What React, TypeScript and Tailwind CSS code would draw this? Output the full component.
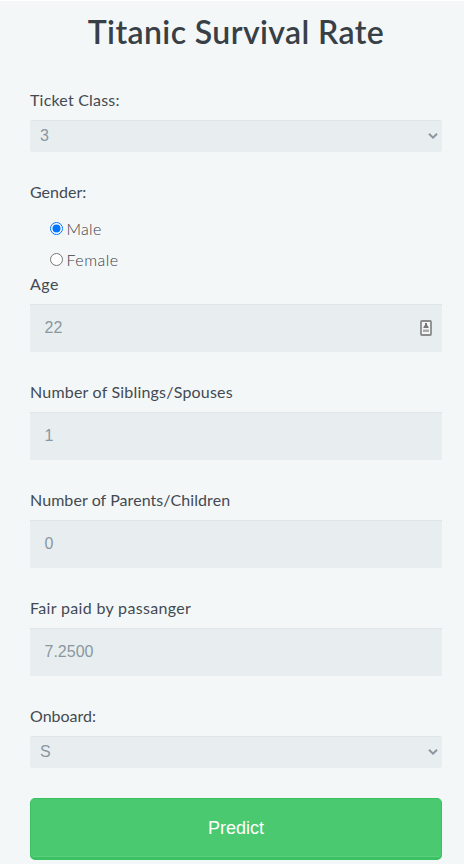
import React from "react";

const labelFont = "font-['Lato','Noto_Sans',sans-serif]";
const fieldFont = "font-['Liberation_Sans',Arial,sans-serif]";

function Label({ children, spacing }: { children: string; spacing: string }) {
  return (
    <div className={`${labelFont} h-6 text-[16px] leading-[22px] text-[#434a52]`}>
      <span className={`${spacing} whitespace-nowrap`}>{children}</span>
    </div>
  );
}

function SelectBox({ value }: { value: string }) {
  return (
    <div className={`${fieldFont} mt-[7px] mb-[29px] flex h-8 items-center justify-between rounded-[2px] bg-[#e8eeef] pr-1 pl-[10px] text-[16px] text-[#8a97a0] shadow-[inset_0_1px_0_rgba(0,0,0,0.03)]`}>
      <span>{value}</span>
      <svg width="10" height="6" viewBox="0 0 10 6" fill="none" stroke="#8a97a0" strokeWidth="2">
        <path d="M1 0.8 5 4.6 9 0.8" />
      </svg>
    </div>
  );
}

function TextBox({ value, children }: { value: string; children?: React.ReactNode }) {
  return (
    <div className={`${fieldFont} mt-[7px] mb-[29px] flex h-12 items-center justify-between bg-[#e8eeef] pr-[10px] pl-[14.5px] text-[16px] text-[#8a97a0] shadow-[inset_0_1px_0_rgba(0,0,0,0.03)]`}>
      <span>{value}</span>
      {children}
    </div>
  );
}

function RadioRow({ label, checked, spacing }: { label: string; checked?: boolean; spacing: string }) {
  return (
    <div className="flex h-[31px] items-center pl-5">
      <svg width="13" height="13" viewBox="0 0 13 13">
        <circle cx="6.5" cy="6.5" r="6" fill="#fff" stroke={checked ? "#0075ff" : "#767676"} />
        {checked && <circle cx="6.5" cy="6.5" r="4" fill="#0075ff" />}
      </svg>
      <span className={`${labelFont} ${spacing} ml-[3.5px] text-[16px] font-light text-[#384047]`}>{label}</span>
    </div>
  );
}

export default function App() {
  return (
    <div className="h-[864px] w-[464px] overflow-hidden border-t border-white bg-[#f4f7f8] px-[30px] pr-[22px]">
      <h1 className={`${labelFont} mt-[9px] mb-[36px] h-[43px] text-center text-[32px] leading-[43px] font-semibold text-[#384047]`}>
        <span className="tracking-[0.4px] whitespace-nowrap">Titanic Survival Rate</span>
      </h1>
      <Label spacing="tracking-[0.2px]">Ticket Class:</Label>
      <SelectBox value="3" />
      <Label spacing="tracking-[0px]">Gender:</Label>
      <div className="mt-[8px] flex flex-col">
        <RadioRow label="Male" checked spacing="tracking-[0.3px]" />
        <RadioRow label="Female" spacing="tracking-[0.5px]" />
      </div>
      <div className="-mt-[2px]">
        <Label spacing="tracking-[0.5px]">Age</Label>
      </div>
      <TextBox value="22">
        <svg width="12" height="16" viewBox="0 0 12 16">
          <rect x="1" y="1" width="10" height="14" rx="0.8" fill="#f4f6f6" stroke="#8b8b8b" strokeWidth="1.8" />
          <path d="M5 3h2v2l1.6 2v1H3.4V7L5 5z" fill="#777" />
          <path d="M3 9.5h6v2.5H3z" fill="#aaa" />
        </svg>
      </TextBox>
      <Label spacing="tracking-[0.2px]">Number of Siblings/Spouses</Label>
      <TextBox value="1" />
      <Label spacing="tracking-[0.07px]">Number of Parents/Children</Label>
      <TextBox value="0" />
      <Label spacing="tracking-[0.33px]">Fair paid by passanger</Label>
      <TextBox value="7.2500" />
      <Label spacing="tracking-[0px]">Onboard:</Label>
      <SelectBox value="S" />
      <button className={`${fieldFont} mt-[30px] block h-[62px] w-full rounded-[5px] border border-b-[3px] border-[#3ac162] bg-[#4bc970] text-[18px] text-white shadow-[inset_0_-1px_0_rgba(255,255,255,0.1)]`}>
        Predict
      </button>
    </div>
  );
}
